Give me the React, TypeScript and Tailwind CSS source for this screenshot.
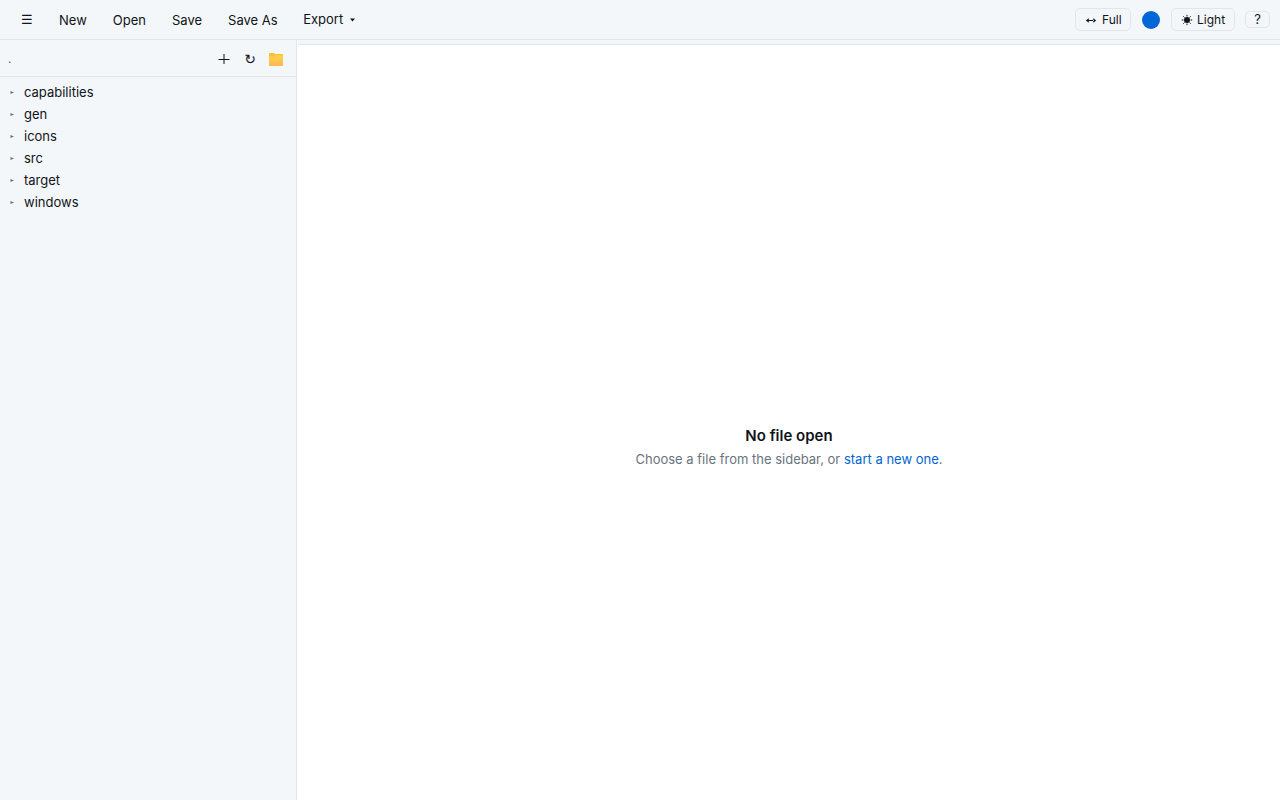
const folders = ['capabilities', 'gen', 'icons', 'src', 'target', 'windows'];

const menuItems = ['New', 'Open', 'Save', 'Save As'];

function WidthIcon() {
    return (
        <svg width="12" height="12" viewBox="0 0 12 12" fill="currentColor">
            <path d="M3 6h6v1H3zM.8 6.500l3-2.300v4.600zM11.200 6.500l-3-2.300v4.600z" />
        </svg>
    );
}

function SunIcon() {
    return (
        <svg width="12" height="12" viewBox="0 0 12 12" stroke="currentColor">
            <circle cx="6" cy="6" r="3" fill="currentColor" stroke="none" />
            <path d="M6 .8v1.7M6 9.5v1.7M.8 6h1.7M9.5 6h1.7M2.3 2.3l1.2 1.2M8.5 8.5l1.2 1.2M2.3 9.7l1.2-1.2M8.5 3.5l1.2-1.2" />
        </svg>
    );
}

function PlusIcon() {
    return (
        <svg width="12" height="12" viewBox="0 0 12 12" fill="none" stroke="currentColor">
            <path d="M6 1v10M.5 6.5h11" />
        </svg>
    );
}

function FolderIcon() {
    return (
        <svg width="14" height="14" viewBox="0 0 14 14">
            <defs>
                <linearGradient id="folder" x1="0" y1="0" x2="0" y2="1">
                    <stop offset="0" stopColor="#ffd44f" />
                    <stop offset="1" stopColor="#ffb650" />
                </linearGradient>
            </defs>
            <path d="M0 1.5Q0 1 .5 1H5l1 1h7.500q.5 0 .5.5v3H0z" fill="#fcc22e" />
            <path d="M0 4.500h5L6 3.500h7.500q.5 0 .5.5v9.500q0 .5-.5.5H.5q-.5 0-.5-.5z" fill="url(#folder)" />
        </svg>
    );
}

function Toolbar() {
    return (
        <header className="h-10 shrink-0 flex items-center justify-between pl-3 pr-2.5 bg-[#f3f7fa] border-b border-[#e1e6eb]">
            <div className="flex items-center gap-2 text-[13px]">
                <button className="px-[9px] py-1">☰</button>
                {menuItems.map((item) => (
                    <button key={item} className="px-[9px] pt-1.5 pb-1">{item}</button>
                ))}
                <button className="px-[9px] py-1 flex items-center gap-1.5 -ml-[0.5px]">
                    Export
                    <svg width="5" height="4" viewBox="0 0 5 4" className="ml-[0.5px]"><path d="M0 .5h5L2.500 3.500z" fill="currentColor" /></svg>
                </button>
            </div>
            <div className="flex items-center gap-2.5 text-xs">
                <button className="h-[23px] w-14 pl-[9px] flex items-center gap-[5px] rounded-[5px] border border-[#e1e6eb]"><WidthIcon /> Full</button>
                <button className="size-[18px] mx-px rounded-full bg-[#0366d6]" title="Accent color" />
                <button className="h-[23px] w-16 pl-[9px] flex items-center gap-1 rounded-[5px] border border-[#e1e6eb]"><SunIcon /> Light</button>
                <button className="h-[17px] w-[25px] rounded-[5px] border border-[#e1e6eb] text-[13px] leading-[15px]">?</button>
            </div>
        </header>
    );
}

function Sidebar() {
    return (
        <aside className="w-[297px] shrink-0 bg-[#f3f7fa] border-r border-[#e1e6eb]">
            <div className="h-[37px] flex items-center justify-between pl-2 pr-[13px] pt-px border-b border-[#e1e6eb]">
                <span className="text-xs text-[#586069]">.</span>
                <div className="flex items-center gap-3.5">
                    <button><PlusIcon /></button>
                    <button className="w-3 text-sm leading-3 font-['DejaVu_Sans',sans-serif]">↻</button>
                    <button className="-ml-px"><FolderIcon /></button>
                </div>
            </div>
            <ul className="pt-[5px]">
                {folders.map((name) => (
                    <li key={name} className="h-[22px] flex items-center pl-2 text-[13px]">
                        <span className="w-4 pl-0.5 pb-px text-[#6a737d]">
                            <svg width="4" height="3" viewBox="0 0 4 3"><path d="M.5 0v3L4 1.500z" fill="currentColor" /></svg>
                        </span>
                        {name}
                    </li>
                ))}
            </ul>
        </aside>
    );
}

export default function App() {
    return (
        <div className="h-screen flex flex-col bg-white text-[#111418] font-['Inter',sans-serif]">
            <Toolbar />
            <div className="flex-1 min-h-0 flex">
                <Sidebar />
                <main className="flex-1 flex flex-col pl-px">
                    <div className="h-[5px] bg-[#f3f7fa] border-b border-[#e1e6eb]" />
                    <div className="flex-1 flex flex-col items-center justify-center pt-[49px] gap-0.5">
                        <h2 className="text-[15px] leading-[22px] font-semibold">No file open</h2>
                        <p className="text-[13px] leading-5 text-[#6a737d]">
                            Choose a file from the sidebar, or <a href="#" className="text-[#0366d6]">start a new one</a>.
                        </p>
                    </div>
                </main>
            </div>
        </div>
    );
}
